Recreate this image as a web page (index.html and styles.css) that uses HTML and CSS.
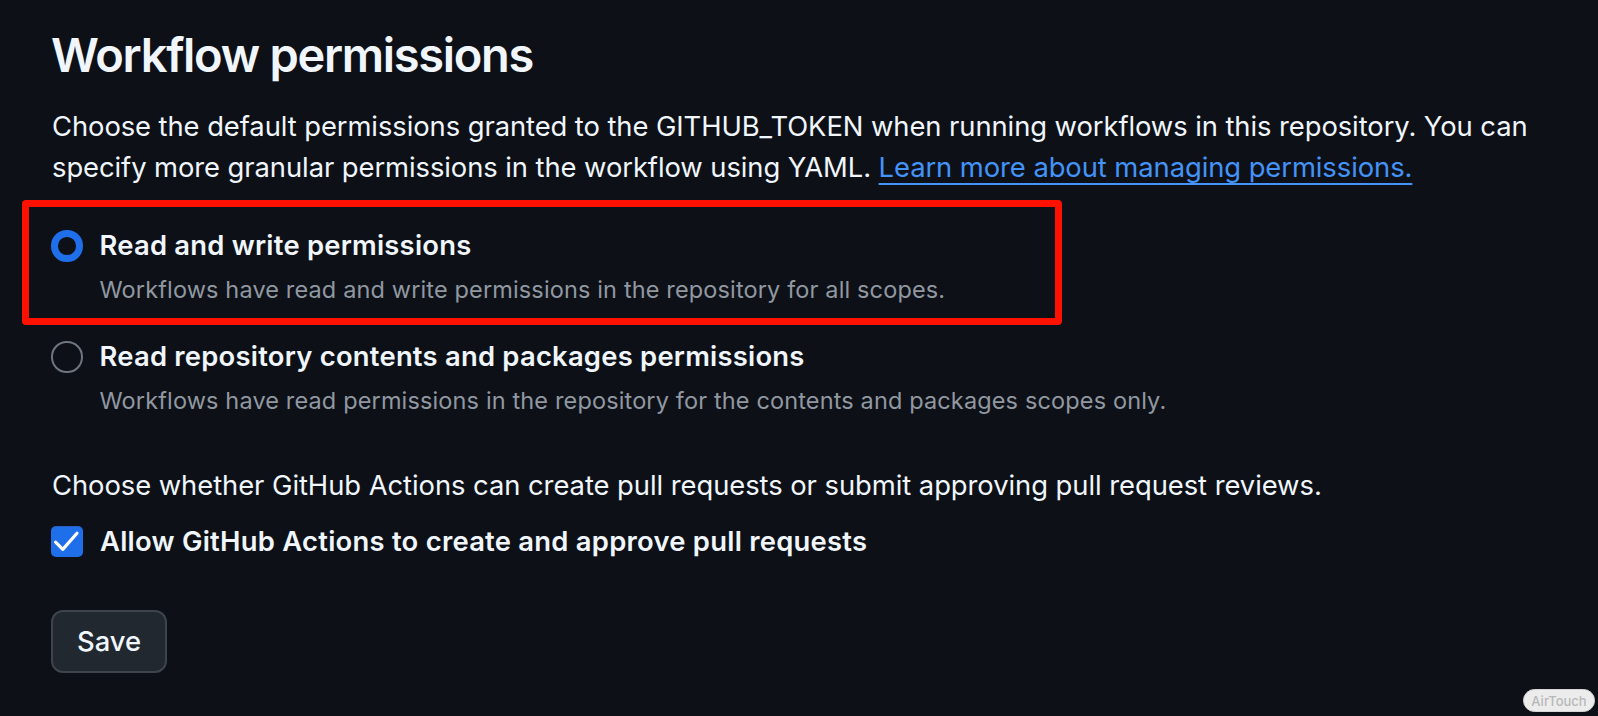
FILE: index.html
```html
<!DOCTYPE html>
<html lang="en">
<head>
<meta charset="utf-8">
<title>Workflow permissions</title>
<link rel="stylesheet" href="styles.css">
</head>
<body>
<main class="page">
  <h2 class="title">Workflow permissions</h2>
  <p class="text">Choose the default permissions granted to the GITHUB_TOKEN when running workflows in this repository. You can specify more granular permissions in the workflow using YAML. <a class="link" href="#">Learn more about managing permissions.</a></p>

  <div class="options">
    <label class="option option-highlight">
      <span class="radio radio-checked"></span>
      <span class="option-body">
        <span class="option-label">Read and write permissions</span>
        <span class="option-note">Workflows have read and write permissions in the repository for all scopes.</span>
      </span>
    </label>
    <label class="option">
      <span class="radio"></span>
      <span class="option-body">
        <span class="option-label">Read repository contents and packages permissions</span>
        <span class="option-note">Workflows have read permissions in the repository for the contents and packages scopes only.</span>
      </span>
    </label>
  </div>

  <p class="text text-second">Choose whether GitHub Actions can create pull requests or submit approving pull request reviews.</p>

  <label class="check">
    <span class="checkbox">
      <svg viewBox="0 0 32 32" width="32" height="32" aria-hidden="true"><polyline points="4.6,17.2 11.8,24.4 26,8.2" fill="none" stroke="#ffffff" stroke-width="3.2" stroke-linecap="round" stroke-linejoin="round"/></svg>
    </span>
    <span class="option-label check-label">Allow GitHub Actions to create and approve pull requests</span>
  </label>

  <button class="btn" type="button">Save</button>
</main>
<div class="badge">AirTouch</div>
</body>
</html>
```

FILE: styles.css
```css
html, body {
  margin: 0;
  padding: 0;
  background: #0d1117;
}

body {
  width: 1598px;
  height: 716px;
  position: relative;
  overflow: hidden;
  font-family: Inter, "Noto Sans", "Liberation Sans", sans-serif;
  color: #f0f6fc;
}

.page {
  padding: 26px 0 0 51px;
  width: 1500px;
  display: flex;
  flex-direction: column;
  align-items: flex-start;
}

.title {
  margin: 0;
  font-size: 47px;
  line-height: 58px;
  font-weight: 600;
  letter-spacing: -1.3px;
}

.text {
  margin: 22px 0 0 1px;
  font-size: 27.4px;
  line-height: 41px;
  font-weight: 400;
  letter-spacing: -0.08px;
}

.text-second {
  margin-top: 47px;
  letter-spacing: -0.06px;
}

.link {
  color: #4493f8;
  text-decoration: underline;
  text-decoration-thickness: 2px;
  text-underline-offset: 6px;
}

.options {
  margin-top: 37px;
  display: flex;
  flex-direction: column;
  gap: 29px;
}

.option {
  display: flex;
  align-items: flex-start;
  gap: 17px;
  position: relative;
}

.option-highlight::before {
  content: "";
  position: absolute;
  left: -29px;
  top: -25px;
  width: 1040px;
  height: 125px;
  box-sizing: border-box;
  border: 7.5px solid #ff1100;
  border-radius: 4px;
  pointer-events: none;
}

.radio {
  flex: none;
  width: 31.5px;
  height: 31.5px;
  margin-top: 5px;
  box-sizing: border-box;
  border-radius: 50%;
  border: 2px solid #6e7681;
}

.radio-checked {
  border: 7.5px solid #1f6feb;
}

.option-body {
  display: flex;
  flex-direction: column;
  gap: 6px;
}

.option-label {
  font-size: 27.4px;
  line-height: 41px;
  font-weight: 600;
  letter-spacing: 0.23px;
}

.check-label {
  letter-spacing: 0.25px;
}

.option-note {
  font-size: 23.5px;
  line-height: 35px;
  color: #9198a1;
  letter-spacing: 0.14px;
}

.check {
  margin-top: 14.5px;
  display: flex;
  align-items: flex-start;
  gap: 17px;
}

.checkbox {
  flex: none;
  width: 32px;
  height: 31px;
  margin-top: 5px;
  box-sizing: border-box;
  border-radius: 5px;
  background: #1f6feb;
  border-top: 1.5px solid #2a5fc0;
  display: flex;
  align-items: center;
  justify-content: center;
}

.checkbox svg {
  display: block;
  margin-top: -1.5px;
}

.btn {
  margin-top: 48.5px;
  height: 63px;
  padding: 0 24px;
  box-sizing: border-box;
  background: #212830;
  border: 2px solid #3d444d;
  border-radius: 12px;
  color: #f0f6fc;
  font-family: Inter, "Noto Sans", "Liberation Sans", sans-serif;
  font-size: 27.4px;
  font-weight: 500;
  line-height: 1;
}

.badge {
  position: absolute;
  right: 3px;
  bottom: 4px;
  width: 72px;
  height: 23px;
  box-sizing: border-box;
  border: 1px solid #d6d6d6;
  border-radius: 12px;
  background: #ececec;
  color: #b8b8b8;
  font-family: Inter, "Liberation Sans", sans-serif;
  font-size: 13px;
  font-weight: 500;
  display: flex;
  align-items: center;
  justify-content: center;
}
```
